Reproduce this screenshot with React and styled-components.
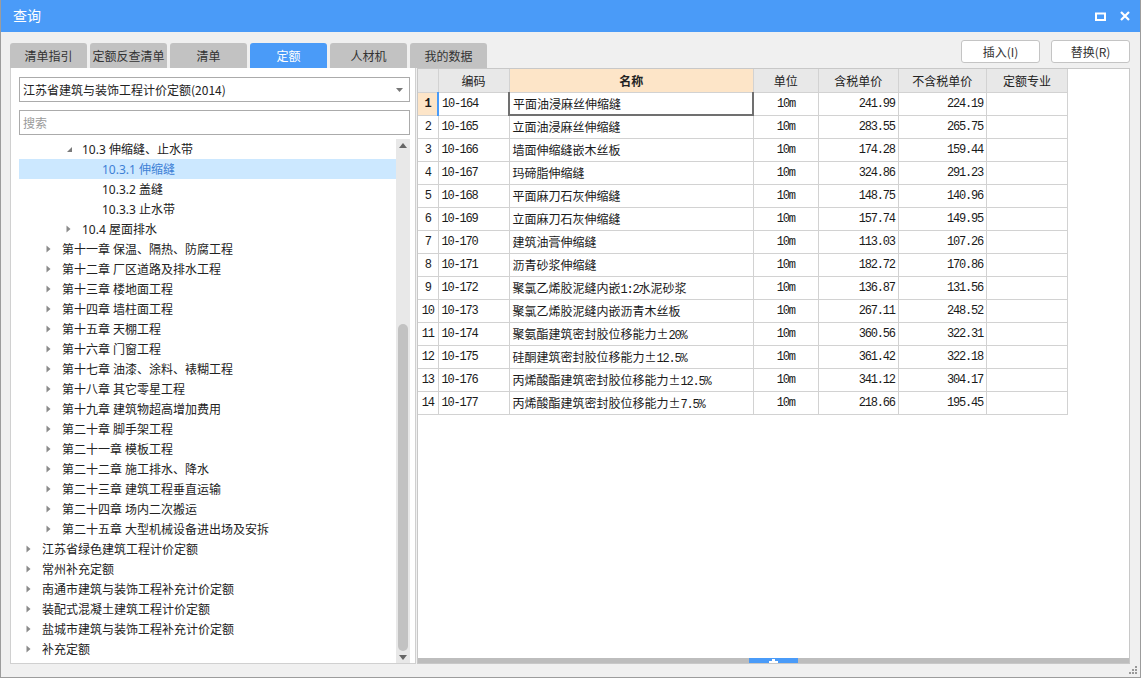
import React from 'react';
import styled, { createGlobalStyle, css } from 'styled-components';

const GlobalStyle = createGlobalStyle`
    html, body { margin:0; padding:0; background:#fff; }
    body { font-family:"Noto Sans", "Noto Sans CJK SC", sans-serif; font-size:12px; color:#222; }
    * { box-sizing:border-box; }
`;

const BLUE = '#4a9bf8';
const MONO = '"Liberation Mono", "Noto Sans CJK SC", monospace';

const Window = styled.div`
    position:relative;
    width:1141px;
    height:678px;
    border:1px solid #9c9c9c;
    border-top:none;
    background:#f0f0f0;
    display:flex;
    flex-direction:column;
`;
const TitleBar = styled.div`
    height:32px;
    background:${BLUE};
    display:flex;
    align-items:center;
    padding:0 12px 0 12px;
    color:#fff;
`;
const Title = styled.div`
    flex:1;
    font-size:14px;
    line-height:16px;
`;
const TitleIcons = styled.div`
    display:flex;
    align-items:center;
    gap:14px;
    margin-right:-2px;
`;
const Body = styled.div`
    flex:1;
    display:flex;
    flex-direction:column;
    padding:0 10px 13px 9px;
`;
const TopRow = styled.div`
    height:36px;
    display:flex;
    justify-content:space-between;
    align-items:flex-end;
`;
const Tabs = styled.div`
    display:flex;
    gap:3px;
`;
const Tab = styled.div`
    width:77px;
    height:25px;
    border-radius:3px 3px 0 0;
    display:flex;
    align-items:center;
    justify-content:center;
    font-family:"Noto Sans CJK SC", sans-serif;
    font-size:12px;
    color:${p => p.$active ? '#fff' : '#333'};
    background:${p => p.$active ? BLUE : '#c2c2c2'};
`;
const Buttons = styled.div`
    align-self:flex-start;
    margin-top:8px;
    display:flex;
    gap:11px;
`;
const Button = styled.button`
    width:79px;
    height:23px;
    border:1px solid #c4c4c4;
    border-radius:3px;
    background:#fff;
    font-family:"Noto Sans CJK SC", sans-serif;
    font-size:12px;
    color:#333;
    padding:0;
`;
const Main = styled.div`
    flex:1;
    display:flex;
    min-height:0;
`;
const LeftPanel = styled.div`
    width:406px;
    background:#fff;
    border:1px solid #d0d0d0;
    border-top:none;
    padding:9px 5px 0 8px;
    display:flex;
    flex-direction:column;
`;
const Field = styled.div`
    height:25px;
    border:1px solid #ababab;
    display:flex;
    align-items:center;
    padding:0 6px 0 3px;
    font-family:"Noto Sans CJK SC", sans-serif;
    font-size:12px;
    color:${p => p.$placeholder ? '#9a9a9a' : '#222'};
    margin-bottom:${p => p.$gap}px;
    justify-content:space-between;
`;
const TreeWrap = styled.div`
    flex:1;
    display:flex;
    min-height:0;
`;
const TreeList = styled.div`
    flex:1;
    overflow:hidden;
`;
const TreeRow = styled.div`
    height:20px;
    display:flex;
    align-items:center;
    padding-left:${p => 5 + p.$level * 20}px;
    background:${p => p.$selected ? '#cce8ff' : 'transparent'};
    color:${p => p.$selected ? '#3d80d6' : '#222'};
    font-size:12px;
    white-space:nowrap;
`;
const ArrowBox = styled.span`
    width:18px;
    height:20px;
    display:flex;
    align-items:center;
    padding-left:2px;
    flex:none;
`;
const VScroll = styled.div`
    width:14px;
    background:#e8e8e8;
    display:flex;
    flex-direction:column;
    align-items:center;
`;
const ScrollArrow = styled.div`
    height:12px;
    display:flex;
    align-items:center;
    justify-content:center;
    flex:none;
`;
const VTrack = styled.div`
    flex:1;
    display:flex;
    flex-direction:column;
    justify-content:flex-end;
`;
const VThumb = styled.div`
    width:10px;
    height:327px;
    border-radius:5px;
    background:#c2c2c2;
`;
const RightPanel = styled.div`
    flex:1;
    margin-left:1px;
    background:#fff;
    border:1px solid #c8c8c8;
    display:flex;
    flex-direction:column;
`;
const GridArea = styled.div`
    flex:1;
    overflow:hidden;
`;
const Grid = styled.table`
    border-collapse:collapse;
    table-layout:fixed;
    width:650px;
`;
const HeadCell = styled.th`
    height:23px;
    padding:0;
    font-family:"Noto Sans CJK SC", sans-serif;
    font-size:12px;
    color:#222;
    border:1px solid #d2d2d2;
    border-top:none;
    background:${p => p.$hot ? '#fde5c8' : '#e8e8e8'};
    font-weight:${p => p.$hot ? 700 : 400};
    text-align:center;
`;
const Cell = styled.td`
    height:23px;
    padding:${p => p.$align === 'right' ? '0 3px 0 0' : p.$align === 'center' ? '0' : '0 0 0 3px'};
    border:1px solid #d2d2d2;
    text-align:${p => p.$align || 'left'};
    white-space:nowrap;
    overflow:hidden;
    font-size:12px;
    color:#1a1a1a;
    font-family:${p => p.$mono ? MONO : '"Noto Sans CJK SC", sans-serif'};
    ${p => p.$mono && css`
        letter-spacing:-1.2px;
    `}
    ${p => p.$current && css`
        background:#fde5c8;
        font-weight:700;
    `}
    ${p => p.$focusLeft && css`
        border-left:2px solid ${BLUE};
    `}
    ${p => p.$focus && css`
        border:2px solid #707070;
        border-top:1px solid ${BLUE};
    `}
`;
const Ascii = styled.span`
    font-family:${MONO};
    font-size:12px;
    letter-spacing:-1.2px;
`;
const HScroll = styled.div`
    height:5px;
    background:#bdbdbd;
    display:flex;
    flex:none;
`;
const HThumb = styled.div`
    margin-left:331px;
    width:49px;
    background:${BLUE};
    display:flex;
    justify-content:center;
    align-items:center;
`;
const Grip = styled.svg`
    position:absolute;
    right:2px;
    bottom:2px;
`;

const Tri = ({ dir, color = '#8a8a8a' }) => {
    if (dir === 'open') {
        return <svg width="7" height="7" viewBox="0 0 7 7"><path d="M6 1 L6 6 L1 6 Z" fill="#7a7a7a" /></svg>;
    }
    return <svg width="5" height="8" viewBox="0 0 5 8"><path d="M0.5 0.5 L4.5 4 L0.5 7.5 Z" fill={color} /></svg>;
};

const tree = [
    { level: 2, text: '10.3 伸缩缝、止水带', arrow: 'open' },
    { level: 3, text: '10.3.1 伸缩缝', selected: true },
    { level: 3, text: '10.3.2 盖缝' },
    { level: 3, text: '10.3.3 止水带' },
    { level: 2, text: '10.4 屋面排水', arrow: 'closed' },
    ...[
        '第十一章 保温、隔热、防腐工程', '第十二章 厂区道路及排水工程', '第十三章 楼地面工程',
        '第十四章 墙柱面工程', '第十五章 天棚工程', '第十六章 门窗工程', '第十七章 油漆、涂料、裱糊工程',
        '第十八章 其它零星工程', '第十九章 建筑物超高增加费用', '第二十章 脚手架工程', '第二十一章 模板工程',
        '第二十二章 施工排水、降水', '第二十三章 建筑工程垂直运输', '第二十四章 场内二次搬运',
        '第二十五章 大型机械设备进出场及安拆',
    ].map(text => ({ level: 1, text, arrow: 'closed' })),
    ...[
        '江苏省绿色建筑工程计价定额', '常州补充定额', '南通市建筑与装饰工程补充计价定额',
        '装配式混凝土建筑工程计价定额', '盐城市建筑与装饰工程补充计价定额', '补充定额',
    ].map(text => ({ level: 0, text, arrow: 'closed' })),
];

const rows = [
    ['10-164', '平面油浸麻丝伸缩缝', '241.99', '224.19'],
    ['10-165', '立面油浸麻丝伸缩缝', '283.55', '265.75'],
    ['10-166', '墙面伸缩缝嵌木丝板', '174.28', '159.44'],
    ['10-167', '玛碲脂伸缩缝', '324.86', '291.23'],
    ['10-168', '平面麻刀石灰伸缩缝', '148.75', '140.96'],
    ['10-169', '立面麻刀石灰伸缩缝', '157.74', '149.95'],
    ['10-170', '建筑油膏伸缩缝', '113.03', '107.26'],
    ['10-171', '沥青砂浆伸缩缝', '182.72', '170.86'],
    ['10-172', '聚氯乙烯胶泥缝内嵌1:2水泥砂浆', '136.87', '131.56'],
    ['10-173', '聚氯乙烯胶泥缝内嵌沥青木丝板', '267.11', '248.52'],
    ['10-174', '聚氨酯建筑密封胶位移能力±20%', '360.56', '322.31'],
    ['10-175', '硅酮建筑密封胶位移能力±12.5%', '361.42', '322.18'],
    ['10-176', '丙烯酸酯建筑密封胶位移能力±12.5%', '341.12', '304.17'],
    ['10-177', '丙烯酸酯建筑密封胶位移能力±7.5%', '218.66', '195.45'],
];

// ascii runs in the name column use the narrow grid font
const renderName = (name) => name.split(/([0-9:.%]+)/).map((part, i) =>
    /^[0-9:.%]+$/.test(part) ? <Ascii key={i}>{part}</Ascii> : part
);

const tabs = ['清单指引', '定额反查清单', '清单', '定额', '人材机', '我的数据'];
const cols = [20, 71, 244, 65, 80, 88, 81];

const App = () => {
    return (
        <>
            <GlobalStyle />
            <Window>
                <TitleBar>
                    <Title>查询</Title>
                    <TitleIcons>
                        <svg width="11" height="9" viewBox="0 0 11 9"><rect x="1" y="1.5" width="9" height="6.5" fill="none" stroke="#fff" strokeWidth="2" /></svg>
                        <svg width="10" height="10" viewBox="0 0 10 10"><path d="M1 1 L9 9 M9 1 L1 9" stroke="#fff" strokeWidth="2.2" /></svg>
                    </TitleIcons>
                </TitleBar>
                <Body>
                    <TopRow>
                        <Tabs>
                            {tabs.map(t => <Tab key={t} $active={t === '定额'}>{t}</Tab>)}
                        </Tabs>
                        <Buttons>
                            <Button>插入(I)</Button>
                            <Button>替换(R)</Button>
                        </Buttons>
                    </TopRow>
                    <Main>
                        <LeftPanel>
                            <Field $gap={8}>
                                <span>江苏省建筑与装饰工程计价定额(2014)</span>
                                <svg width="7" height="4" viewBox="0 0 7 4"><path d="M0 0 L7 0 L3.5 4 Z" fill="#777" /></svg>
                            </Field>
                            <Field $gap={4} $placeholder>搜索</Field>
                            <TreeWrap>
                                <TreeList>
                                    {tree.map((item, i) => (
                                        <TreeRow key={i} $level={item.level} $selected={item.selected}>
                                            <ArrowBox>{item.arrow && <Tri dir={item.arrow} />}</ArrowBox>
                                            {item.text}
                                        </TreeRow>
                                    ))}
                                </TreeList>
                                <VScroll>
                                    <ScrollArrow>
                                        <svg width="8" height="5" viewBox="0 0 8 5"><path d="M0 5 L4 0 L8 5 Z" fill="#666" /></svg>
                                    </ScrollArrow>
                                    <VTrack><VThumb /></VTrack>
                                    <ScrollArrow>
                                        <svg width="8" height="5" viewBox="0 0 8 5"><path d="M0 0 L8 0 L4 5 Z" fill="#666" /></svg>
                                    </ScrollArrow>
                                </VScroll>
                            </TreeWrap>
                        </LeftPanel>
                        <RightPanel>
                            <GridArea>
                                <Grid>
                                    <colgroup>
                                        {cols.map((w, i) => <col key={i} style={{ width: w }} />)}
                                    </colgroup>
                                    <thead>
                                        <tr>
                                            <HeadCell style={{ borderLeft: 'none' }} />
                                            <HeadCell>编码</HeadCell>
                                            <HeadCell $hot>名称</HeadCell>
                                            <HeadCell>单位</HeadCell>
                                            <HeadCell>含税单价</HeadCell>
                                            <HeadCell>不含税单价</HeadCell>
                                            <HeadCell>定额专业</HeadCell>
                                        </tr>
                                    </thead>
                                    <tbody>
                                        {rows.map((r, i) => (
                                            <tr key={r[0]}>
                                                <Cell $mono $align="center" $current={i === 0} style={{ borderLeft: 'none' }}>{i + 1}</Cell>
                                                <Cell $mono $focusLeft={i === 0}>{r[0]}</Cell>
                                                <Cell $focus={i === 0}>{renderName(r[1])}</Cell>
                                                <Cell $mono $align="center">10m</Cell>
                                                <Cell $mono $align="right">{r[2]}</Cell>
                                                <Cell $mono $align="right">{r[3]}</Cell>
                                                <Cell />
                                            </tr>
                                        ))}
                                    </tbody>
                                </Grid>
                            </GridArea>
                            <HScroll>
                                <HThumb>
                                    <svg width="9" height="4" viewBox="0 0 9 4"><path d="M3 0 H6 V2 H9 V4 H0 V2 H3 Z" fill="#fff" /></svg>
                                </HThumb>
                            </HScroll>
                        </RightPanel>
                    </Main>
                </Body>
                <Grip width="9" height="9" viewBox="0 0 9 9">
                    <rect x="6" y="0" width="2" height="2" fill="#999" />
                    <rect x="3" y="3" width="2" height="2" fill="#999" />
                    <rect x="6" y="3" width="2" height="2" fill="#999" />
                    <rect x="0" y="6" width="2" height="2" fill="#999" />
                    <rect x="3" y="6" width="2" height="2" fill="#999" />
                    <rect x="6" y="6" width="2" height="2" fill="#999" />
                </Grip>
            </Window>
        </>
    );
}

export default App;
